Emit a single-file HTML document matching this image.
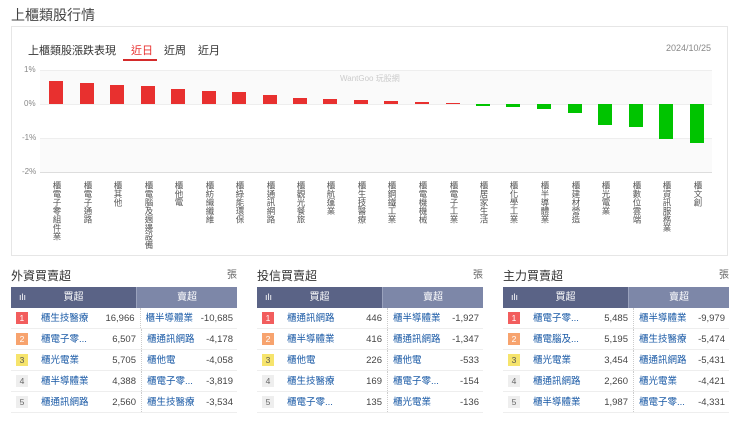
<!DOCTYPE html>
<html><head><meta charset="utf-8">
<style>
*{margin:0;padding:0;box-sizing:border-box}
body{width:740px;height:423px;background:#fff;font-family:"Liberation Sans","Noto Sans CJK TC",sans-serif;position:relative;overflow:hidden;color:#333}
.abs{position:absolute}
.card{left:11px;top:26px;width:717px;height:230px;border:1px solid #e6e6e6;background:#fff}
.bar{position:absolute;width:14px}
.r{background:#e8302f}
.g{background:#00c400}
.lbl{position:absolute;top:181px;writing-mode:vertical-rl;font-size:8.5px;line-height:9px;color:#555;max-height:72px;overflow:hidden}
.ax{font-size:8px;color:#888;position:absolute}
.panel{position:absolute;top:267px;width:226px}
.ptitle{font-size:12px;color:#333;height:20px;line-height:18px;position:relative}
.ptitle span{position:absolute;right:0;top:0;font-size:10px;color:#666}
.hdr{height:21px;display:flex;font-size:10px;color:#fff;line-height:21px}
.hdr .a{width:125px;background:#5a6386;position:relative;text-align:center}
.hdr .b{flex:1;background:#7d87a8;text-align:center;border-left:1px solid #9aa2bd}
.hdr .a i{position:absolute;left:8px;top:0;font-style:normal;font-size:9px}
.row{height:21px;display:flex;font-size:9.5px;line-height:21px;border-bottom:1px solid #eee}
.row .n{width:12px;height:12px;margin:4px 0 0 5px;font-size:8.5px;line-height:12px;text-align:center;color:#fff}
.row .nm{width:64px;margin-left:13px;color:#1a5aa6;white-space:nowrap}
.row .v{width:31px;text-align:right;color:#444}
.row .nm2{margin-left:5px;width:62px;color:#1a5aa6;white-space:nowrap;border-left:1px dotted #ccc;padding-left:5px}
.row .v2{flex:1;text-align:right;color:#444;padding-right:4px}
.c1{background:#f25d5d}.c2{background:#f7a36e}.c3{background:#f6e46c;color:#555!important}.c4,.c5{background:#eee;color:#666!important}
</style></head><body>
<div class="abs" style="left:11px;top:5px;font-size:14px;color:#444">上櫃類股行情</div>
<div class="abs card"></div>
<div class="abs" style="left:28px;top:42px;font-size:11px;color:#333">上櫃類股漲跌表現</div>
<div class="abs" style="left:131px;top:42px;font-size:11px;color:#e8302f">近日</div>
<div class="abs" style="left:123px;top:59px;width:34px;height:2px;background:#d42b2b"></div>
<div class="abs" style="left:164px;top:42px;font-size:11px;color:#333">近周</div>
<div class="abs" style="left:198px;top:42px;font-size:11px;color:#333">近月</div>
<div class="abs" style="left:666px;top:43px;font-size:9px;color:#888">2024/10/25</div>

<div class="abs" style="left:40px;top:70px;width:672px;height:34px;background:#fafafa"></div>
<div class="abs" style="left:40px;top:138px;width:672px;height:34px;background:#fafafa"></div>
<div class="abs" style="left:40px;top:70px;width:672px;height:1px;background:#eee"></div>
<div class="abs" style="left:40px;top:104px;width:672px;height:1px;background:#eee"></div>
<div class="abs" style="left:40px;top:138px;width:672px;height:1px;background:#eee"></div>
<div class="abs" style="left:40px;top:172px;width:672px;height:1px;background:#ddd"></div>
<div class="ax" style="left:24px;top:65px">1%</div>
<div class="ax" style="left:24px;top:99px">0%</div>
<div class="ax" style="left:22px;top:133px">-1%</div>
<div class="ax" style="left:22px;top:167px">-2%</div>
<div class="abs" style="left:340px;top:73px;font-size:8px;color:#ccc">WantGoo 玩股網</div>

<div class="bar r" style="left:49px;top:81px;height:23px"></div>
<div class="bar r" style="left:80px;top:83px;height:21px"></div>
<div class="bar r" style="left:110px;top:85px;height:19px"></div>
<div class="bar r" style="left:141px;top:86px;height:18px"></div>
<div class="bar r" style="left:171px;top:89px;height:15px"></div>
<div class="bar r" style="left:202px;top:91px;height:13px"></div>
<div class="bar r" style="left:232px;top:92px;height:12px"></div>
<div class="bar r" style="left:263px;top:95px;height:9px"></div>
<div class="bar r" style="left:293px;top:98px;height:6px"></div>
<div class="bar r" style="left:323px;top:99px;height:5px"></div>
<div class="bar r" style="left:354px;top:100px;height:4px"></div>
<div class="bar r" style="left:384px;top:101px;height:3px"></div>
<div class="bar r" style="left:415px;top:102px;height:2px"></div>
<div class="bar r" style="left:446px;top:103px;height:1px"></div>
<div class="bar g" style="left:476px;top:104px;height:2px"></div>
<div class="bar g" style="left:506px;top:104px;height:3px"></div>
<div class="bar g" style="left:537px;top:104px;height:5px"></div>
<div class="bar g" style="left:568px;top:104px;height:9px"></div>
<div class="bar g" style="left:598px;top:104px;height:21px"></div>
<div class="bar g" style="left:629px;top:104px;height:23px"></div>
<div class="bar g" style="left:659px;top:104px;height:35px"></div>
<div class="bar g" style="left:690px;top:104px;height:39px"></div>

<div class="lbl" style="left:52px">櫃電子零組件業</div>
<div class="lbl" style="left:83px">櫃電子通路</div>
<div class="lbl" style="left:113px">櫃其他</div>
<div class="lbl" style="left:144px">櫃電腦及週邊設備</div>
<div class="lbl" style="left:174px">櫃他電</div>
<div class="lbl" style="left:205px">櫃紡織纖維</div>
<div class="lbl" style="left:235px">櫃綠能環保</div>
<div class="lbl" style="left:266px">櫃通訊網路</div>
<div class="lbl" style="left:296px">櫃觀光餐旅</div>
<div class="lbl" style="left:326px">櫃航運業</div>
<div class="lbl" style="left:357px">櫃生技醫療</div>
<div class="lbl" style="left:387px">櫃鋼鐵工業</div>
<div class="lbl" style="left:418px">櫃電機機械</div>
<div class="lbl" style="left:449px">櫃電子工業</div>
<div class="lbl" style="left:479px">櫃居家生活</div>
<div class="lbl" style="left:509px">櫃化學工業</div>
<div class="lbl" style="left:540px">櫃半導體業</div>
<div class="lbl" style="left:571px">櫃建材營造</div>
<div class="lbl" style="left:601px">櫃光電業</div>
<div class="lbl" style="left:632px">櫃數位雲端</div>
<div class="lbl" style="left:662px">櫃資訊服務業</div>
<div class="lbl" style="left:693px">櫃文創</div>

<div class="panel" style="left:11px">
<div class="ptitle">外資買賣超<span>張</span></div>
<div class="hdr"><div class="a"><i>ılı</i>買超</div><div class="b">賣超</div></div>
<div class="row"><div class="n c1">1</div><div class="nm">櫃生技醫療</div><div class="v">16,966</div><div class="nm2">櫃半導體業</div><div class="v2">-10,685</div></div>
<div class="row"><div class="n c2">2</div><div class="nm">櫃電子零...</div><div class="v">6,507</div><div class="nm2">櫃通訊網路</div><div class="v2">-4,178</div></div>
<div class="row"><div class="n c3">3</div><div class="nm">櫃光電業</div><div class="v">5,705</div><div class="nm2">櫃他電</div><div class="v2">-4,058</div></div>
<div class="row"><div class="n c4">4</div><div class="nm">櫃半導體業</div><div class="v">4,388</div><div class="nm2">櫃電子零...</div><div class="v2">-3,819</div></div>
<div class="row"><div class="n c5">5</div><div class="nm">櫃通訊網路</div><div class="v">2,560</div><div class="nm2">櫃生技醫療</div><div class="v2">-3,534</div></div>
</div>

<div class="panel" style="left:257px">
<div class="ptitle">投信買賣超<span>張</span></div>
<div class="hdr"><div class="a"><i>ılı</i>買超</div><div class="b">賣超</div></div>
<div class="row"><div class="n c1">1</div><div class="nm">櫃通訊網路</div><div class="v">446</div><div class="nm2">櫃半導體業</div><div class="v2">-1,927</div></div>
<div class="row"><div class="n c2">2</div><div class="nm">櫃半導體業</div><div class="v">416</div><div class="nm2">櫃通訊網路</div><div class="v2">-1,347</div></div>
<div class="row"><div class="n c3">3</div><div class="nm">櫃他電</div><div class="v">226</div><div class="nm2">櫃他電</div><div class="v2">-533</div></div>
<div class="row"><div class="n c4">4</div><div class="nm">櫃生技醫療</div><div class="v">169</div><div class="nm2">櫃電子零...</div><div class="v2">-154</div></div>
<div class="row"><div class="n c5">5</div><div class="nm">櫃電子零...</div><div class="v">135</div><div class="nm2">櫃光電業</div><div class="v2">-136</div></div>
</div>

<div class="panel" style="left:503px">
<div class="ptitle">主力買賣超<span>張</span></div>
<div class="hdr"><div class="a"><i>ılı</i>買超</div><div class="b">賣超</div></div>
<div class="row"><div class="n c1">1</div><div class="nm">櫃電子零...</div><div class="v">5,485</div><div class="nm2">櫃半導體業</div><div class="v2">-9,979</div></div>
<div class="row"><div class="n c2">2</div><div class="nm">櫃電腦及...</div><div class="v">5,195</div><div class="nm2">櫃生技醫療</div><div class="v2">-5,474</div></div>
<div class="row"><div class="n c3">3</div><div class="nm">櫃光電業</div><div class="v">3,454</div><div class="nm2">櫃通訊網路</div><div class="v2">-5,431</div></div>
<div class="row"><div class="n c4">4</div><div class="nm">櫃通訊網路</div><div class="v">2,260</div><div class="nm2">櫃光電業</div><div class="v2">-4,421</div></div>
<div class="row"><div class="n c5">5</div><div class="nm">櫃半導體業</div><div class="v">1,987</div><div class="nm2">櫃電子零...</div><div class="v2">-4,331</div></div>
</div>
</body></html>
